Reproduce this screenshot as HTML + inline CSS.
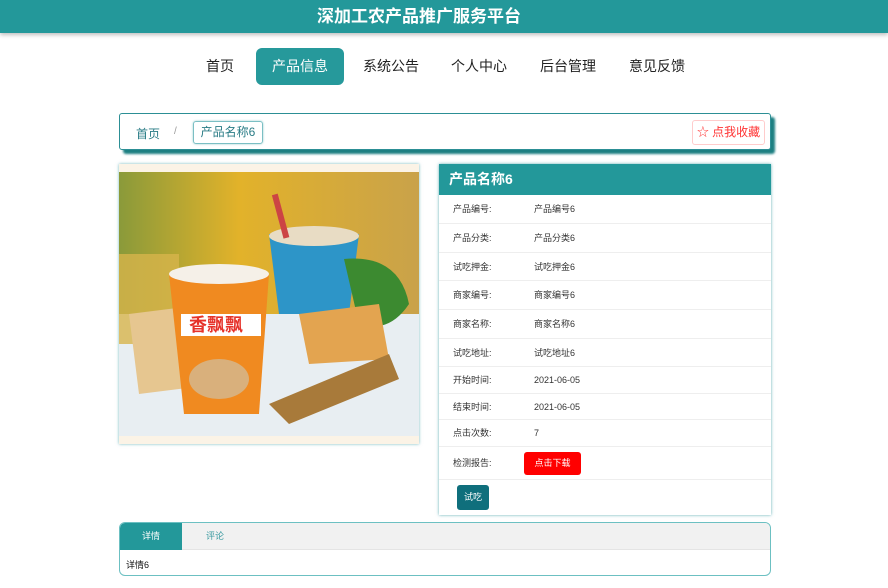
<!DOCTYPE html>
<html><head><meta charset="utf-8"><style>
*{margin:0;padding:0;box-sizing:border-box}
body{width:888px;height:588px;background:#fff;font-family:"Liberation Sans","Noto Sans CJK SC",sans-serif;position:relative;overflow:hidden}
.hdr{position:absolute;left:0;top:0;width:888px;height:33px;background:#23989a;color:#fff;font-size:17px;font-weight:bold;text-align:center;line-height:33px;box-shadow:0 2px 4px rgba(0,0,0,.25)}
.hdr span{position:relative;left:-25px}
.nav{position:absolute;top:48px;height:37px;font-size:14px;color:#222;line-height:37px;text-align:center;border-radius:6px}
.nav.a{background:#26999b;color:#fff}
.bc{position:absolute;left:119px;top:113px;width:652px;height:37px;border:1px solid #2c8f95;border-radius:3px;box-shadow:4px 4px 2px #1d7f82;background:#fff;font-size:12px}
.img{position:absolute;left:119px;top:164px;width:300px;height:280px;background:#fbf3e6;box-shadow:0 0 3px rgba(30,140,150,.6);overflow:hidden}
.tbl{position:absolute;left:439px;top:164px;width:332px;height:351px;box-shadow:0 0 3px rgba(30,140,150,.7);background:#fff}
.row{position:absolute;left:0;width:332px;border-bottom:1px solid #eee;font-size:9px;color:#333}
.row b{font-weight:normal;position:absolute;left:14px}
.row i{font-style:normal;position:absolute;left:95px}
.tabs{position:absolute;left:119px;top:522px;width:652px;height:54px;border:1px solid #6cc0c2;border-radius:6px;overflow:hidden}
</style></head><body>
<div class="hdr"><span>深加工农产品推广服务平台</span></div>
<div class="nav" style="left:200px;width:40px">首页</div>
<div class="nav a" style="left:256px;width:88px">产品信息</div>
<div class="nav" style="left:359px;width:64px">系统公告</div>
<div class="nav" style="left:447px;width:64px">个人中心</div>
<div class="nav" style="left:536px;width:64px">后台管理</div>
<div class="nav" style="left:625px;width:64px">意见反馈</div>

<div class="bc">
<span style="position:absolute;left:16px;top:11px;color:#2a7c86">首页</span>
<span style="position:absolute;left:54px;top:12px;color:#999;font-size:10px">/</span>
<span style="position:absolute;left:73px;top:7px;height:23px;width:70px;border:1px solid #7bbfc4;border-radius:3px;line-height:21px;text-align:center;color:#2a7c86;box-shadow:0 0 2px #9cc">产品名称6</span>
<span style="position:absolute;left:572px;top:6px;height:25px;width:73px;border:1px solid #fcc;border-radius:3px;line-height:23px;text-align:center;color:#f33">☆ 点我收藏</span>
</div>

<div class="img">
<svg width="300" height="280" viewBox="0 0 300 280">
<defs><linearGradient id="bg" x1="0" y1="0" x2="1" y2="0"><stop offset="0" stop-color="#8a9a3a"/><stop offset=".4" stop-color="#e2b22a"/><stop offset="1" stop-color="#c9a24a"/></linearGradient></defs>
<rect x="0" y="8" width="300" height="264" fill="url(#bg)"/>
<rect x="0" y="150" width="300" height="122" fill="#e8eef2"/>
<rect x="0" y="90" width="60" height="90" fill="#d7b44b" opacity=".8"/>
<path d="M150 70 L240 70 L230 150 L160 150Z" fill="#2d95c8"/>
<ellipse cx="195" cy="72" rx="45" ry="10" fill="#e8dcc4"/>
<rect x="158" y="30" width="6" height="45" fill="#c44" transform="rotate(-15 160 50)"/>
<path d="M225 95 Q280 90 290 140 Q270 170 240 160Z" fill="#3c8a30"/>
<path d="M180 150 L260 140 L270 195 L190 200Z" fill="#e3a450"/>
<path d="M10 150 L90 140 L100 220 L20 230Z" fill="#e6c690"/>
<path d="M50 110 L150 110 L140 250 L65 250Z" fill="#f08a20"/>
<ellipse cx="100" cy="110" rx="50" ry="10" fill="#f5f0e8"/>
<rect x="62" y="150" width="80" height="22" fill="#fff"/>
<text x="70" y="167" font-size="18" font-weight="bold" fill="#e6322a" font-family="Noto Sans CJK SC">香飘飘</text>
<ellipse cx="100" cy="215" rx="30" ry="20" fill="#d9b07c"/>
<path d="M150 240 L270 190 L280 215 L170 260Z" fill="#a87a3a"/>
</svg>
</div>

<div class="tbl">
<div style="position:absolute;left:0;top:0;width:332px;height:31px;background:#23989a;color:#fff;font-size:14px;font-weight:bold;line-height:31px;padding-left:10px">产品名称6</div>
<div class="row" style="top:31px;height:29px;line-height:29px"><b>产品编号:</b><i>产品编号6</i></div>
<div class="row" style="top:60px;height:29px;line-height:29px"><b>产品分类:</b><i>产品分类6</i></div>
<div class="row" style="top:89px;height:28px;line-height:28px"><b>试吃押金:</b><i>试吃押金6</i></div>
<div class="row" style="top:117px;height:29px;line-height:29px"><b>商家编号:</b><i>商家编号6</i></div>
<div class="row" style="top:146px;height:29px;line-height:29px"><b>商家名称:</b><i>商家名称6</i></div>
<div class="row" style="top:175px;height:28px;line-height:28px"><b>试吃地址:</b><i>试吃地址6</i></div>
<div class="row" style="top:203px;height:27px;line-height:27px"><b>开始时间:</b><i>2021-06-05</i></div>
<div class="row" style="top:230px;height:26px;line-height:26px"><b>结束时间:</b><i>2021-06-05</i></div>
<div class="row" style="top:256px;height:27px;line-height:27px"><b>点击次数:</b><i>7</i></div>
<div class="row" style="top:283px;height:33px;line-height:33px"><b>检测报告:</b><span style="position:absolute;left:85px;top:5px;width:57px;height:23px;background:#f00;color:#fff;border-radius:3px;line-height:23px;text-align:center">点击下载</span></div>
<div style="position:absolute;left:18px;top:321px;width:32px;height:25px;background:#0f6f7c;color:#fff;font-size:9px;border-radius:3px;line-height:25px;text-align:center">试吃</div>
</div>

<div class="tabs">
<div style="height:27px;background:#f1f1f1;border-bottom:1px solid #e4e4e4;font-size:9px;line-height:27px;position:relative">
<span style="position:absolute;left:0;top:0;width:62px;height:27px;background:#23989a;color:#fff;text-align:center">详情</span>
<span style="position:absolute;left:86px;color:#3a9aa0">评论</span>
</div>
<div style="font-size:9px;color:#111;padding:8px 0 0 6px">详情6</div>
</div>
</body></html>
